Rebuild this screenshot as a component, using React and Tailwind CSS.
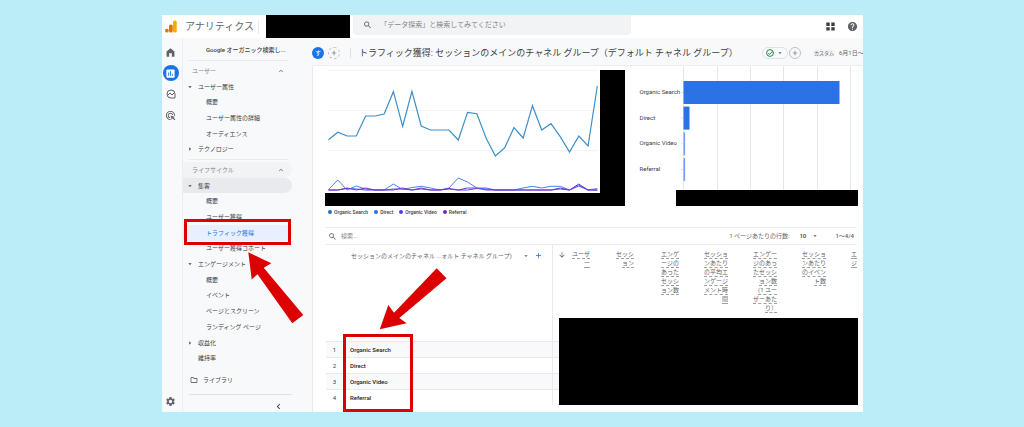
import React from "react";
import {
  MdAdsClick,
  MdArrowDropDown,
  MdArrowRight,
  MdArrowDownward,
  MdAdd,
  MdHelp,
  MdAssessment,
  MdOutlineFolder,
  MdSettings,
  MdSearch,
  MdExpandLess,
  MdChevronLeft,
} from "react-icons/md";

const FIRST_GROUP = [
  { label: "ユーザー属性", kind: "open" },
  { label: "概要", kind: "leaf" },
  { label: "ユーザー属性の詳細", kind: "leaf" },
  { label: "オーディエンス", kind: "leaf" },
  { label: "テクノロジー", kind: "closed" },
];

const SECOND_GROUP = [
  { label: "集客", kind: "open", shaded: true },
  { label: "概要", kind: "leaf" },
  { label: "ユーザー獲得", kind: "leaf" },
  { label: "トラフィック獲得", kind: "leaf", active: true },
  { label: "ユーザー獲得コホート", kind: "leaf" },
  { label: "エンゲージメント", kind: "open" },
  { label: "概要", kind: "leaf" },
  { label: "イベント", kind: "leaf" },
  { label: "ページとスクリーン", kind: "leaf" },
  { label: "ランディング ページ", kind: "leaf" },
  { label: "収益化", kind: "closed" },
  { label: "維持率", kind: "plain" },
];

const METRICS = [
  ["ユーザ", "ー"],
  ["セッシ", "ョン"],
  ["エンゲ", "ージの", "あった", "セッシ", "ョン数"],
  ["セッショ", "ンあたり", "の平均エ", "ンゲージ", "メント時", "間"],
  ["エンゲー", "ジのあっ", "たセッシ", "ョン数", "(1 ユー", "ザーあた", "り）"],
  ["セッショ", "ンあたり", "のイベン", "ト数"],
  ["エ", "ジ"],
];

const CHANNELS = ["Organic Search", "Direct", "Organic Video", "Referral"];

const LEGEND = [
  { label: "Organic Search", dot: "bg-[#1a73b8]" },
  { label: "Direct", dot: "bg-[#1a73e8]" },
  { label: "Organic Video", dot: "bg-[#4545e8]" },
  { label: "Referral", dot: "bg-[#7627bb]" },
];

const ORGANIC = [
  139.7, 132.3, 136, 136, 116, 116, 114, 91.7, 126.5, 91.3, 126, 130, 130, 130, 140, 112.3, 113.7,
  138, 156, 148, 127.7, 138, 105.7, 130, 123.7, 136.7, 152, 136, 146, 86,
];
const DIRECT = [
  189.5, 180, 190, 186, 189, 190, 190, 184, 189.5, 187.5, 186.3, 188, 190, 188, 178, 182, 188, 188,
  190, 190, 190, 188, 186.3, 188, 186.3, 186.3, 190, 185, 190, 188.5,
];
const VIDEO = [
  190, 190, 188.5, 189, 190, 190, 190, 189, 189, 190, 189, 190, 190, 189, 190, 190, 188.5, 189, 190,
  190, 190, 190, 190, 190, 190, 189, 190, 186, 190, 190,
];
const REFERRAL = [
  190, 190, 188, 190, 188, 190, 190, 190, 188, 190, 188, 190, 190, 188.5, 190, 188, 188, 190, 190,
  190, 190, 190, 190, 190, 190, 188, 190, 184, 190, 190,
];

const toPoints = (values) => values.map((y, i) => `${328.5 + i * 9.27},${y}`).join(" ");

function NavRow({ item }) {
  const bg = item.shaded ? "bg-[#e8eaed]" : item.active ? "bg-[#e8f0fe]" : "";
  const pad = item.kind === "leaf" ? "pl-[23px]" : item.kind === "plain" ? "pl-[15px]" : "pl-[3px]";
  const color = item.active ? "text-[#1a73e8]" : "text-[#3c4043]";
  return (
    <li className="flex min-h-0 flex-1">
      <a
        href="#"
        aria-current={item.active ? "page" : undefined}
        className={`mr-5 flex flex-1 items-center rounded-r-full whitespace-nowrap ${bg} ${pad} ${color}`}
      >
        {item.kind === "open" && <MdArrowDropDown className="mr-1 size-2" />}
        {item.kind === "closed" && <MdArrowRight className="mr-1 size-2" />}
        {item.label}
      </a>
    </li>
  );
}

function GroupHeader({ label, shaded }) {
  return (
    <li className="flex min-h-0 flex-1">
      <button
        type="button"
        className={`mr-5 flex flex-1 items-center justify-between rounded-r-full pr-1 pl-[9px] text-[#80868b] ${
          shaded ? "bg-[#f1f3f4]" : ""
        }`}
      >
        {label}
        <MdExpandLess className="mr-[3px] size-2 text-[#5f6368]" />
      </button>
    </li>
  );
}

function Header() {
  return (
    <header className="flex h-[23px] shrink-0 items-center bg-white">
      <svg viewBox="0 0 24 26" className="ml-[3px] h-[13px] w-3 shrink-0" role="img" aria-label="ロゴ">
        <rect x="16" y="1" width="7.5" height="24" rx="3.2" fill="#f9ab00" />
        <rect x="8" y="9" width="7.5" height="16" rx="3.2" fill="#e37400" />
        <circle cx="3.8" cy="21.3" r="3.7" fill="#e37400" />
      </svg>
      <span className="ml-2 text-[10px] leading-3 whitespace-nowrap text-[#5f6368]">アナリティクス</span>
      <div className="ml-1 h-[14px] w-px bg-[#e8eaed]" />
      <div className="ml-[7px] h-full w-[84px] shrink-0 bg-black" />
      <label className="ml-[3px] flex h-5 w-[278px] items-center self-start rounded-b bg-[#f1f3f4] pl-[10px]">
        <MdSearch className="size-[10px] text-[#5f6368]" />
        <input
          type="search"
          aria-label="検索"
          placeholder="「データ探索」と検索してみてください"
          className="ml-2 w-full bg-transparent text-[7px] leading-[10px] outline-none placeholder:text-[#80868b]"
        />
      </label>
      <div className="mr-[5px] ml-auto flex items-center gap-3">
        <button type="button" aria-label="アプリ">
          <svg viewBox="0 0 9 9" className="size-[9px] fill-[#3c4043]">
            <path d="M0.3 0.5h3.4v3.4H0.3zM5.3 0.5h3.4v3.4H5.3zM0.3 5.2h3.4v3.4H0.3zM5.3 5.2h3.4v3.4H5.3z" />
          </svg>
        </button>
        <button type="button" aria-label="ヘルプ">
          <MdHelp className="size-[11px] text-[#5f6368]" />
        </button>
      </div>
    </header>
  );
}

function Rail() {
  return (
    <nav aria-label="メイン" className="flex w-[21px] shrink-0 flex-col items-center border-r border-[#eceef1] pr-[3px] text-[#5f6368]">
      <a href="#" aria-label="ホーム" className="mt-[10px]">
        <svg viewBox="0 0 16 16" className="size-[9px] fill-[#5f6368]">
          <path d="M8 0.5L1 6v9.5h4.6V9.5h4.8v6H15V6z" />
        </svg>
      </a>
      <a href="#" aria-label="レポート" className="mt-2 flex size-4 items-center justify-center rounded-full bg-[#1a73e8] text-white">
        <MdAssessment className="size-[11px]" />
      </a>
      <a href="#" aria-label="探索" className="mt-2">
        <svg viewBox="0 0 20 20" className="size-[10px] fill-none stroke-[#5f6368] stroke-2">
          <path d="M18 10a8 8 0 1 0-8 8h8z" />
          <path d="M4 12l4-4 4 4 6-6" />
        </svg>
      </a>
      <a href="#" aria-label="広告" className="mt-[11px]">
        <MdAdsClick className="size-[11px]" />
      </a>
      <a href="#" aria-label="管理" className="mt-auto mb-[5px]">
        <MdSettings className="size-[11px]" />
      </a>
    </nav>
  );
}

function Sidebar() {
  return (
    <nav aria-label="レポート" className="flex w-[129px] shrink-0 flex-col text-[6px] leading-2">
      <a href="#" className="mr-6 ml-[6px] flex h-[23px] shrink-0 items-center border-b border-[#e8eaed] pt-px pl-[17px] font-medium whitespace-nowrap text-[#3c4043]">
        Google オーガニック検索し...
      </a>
      <ul className="mt-[2px] flex min-h-0 flex-[6] flex-col">
        <GroupHeader label="ユーザー" />
        {FIRST_GROUP.map((item) => (
          <NavRow key={item.label} item={item} />
        ))}
      </ul>
      <div className="mt-[2px] mr-6 mb-[2px] ml-[6px] h-px shrink-0 bg-[#e8eaed]" />
      <ul className="flex min-h-0 flex-[13] flex-col">
        <GroupHeader label="ライフサイクル" shaded />
        {SECOND_GROUP.map((item, i) => (
          <NavRow key={i} item={item} />
        ))}
      </ul>
      <a href="#" className="mt-1 ml-[7px] flex h-5 shrink-0 items-center text-[#3c4043]">
        <MdOutlineFolder className="mr-[5px] size-2" />
        ライブラリ
      </a>
      <div className="mt-1 mr-5 ml-[6px] h-px shrink-0 bg-[#dfe1e5]" />
      <button type="button" aria-label="メニューを閉じる" className="mr-7 flex h-[17px] shrink-0 items-center self-end pt-[6px]">
        <MdChevronLeft className="size-[11px] text-[#3c4043]" />
      </button>
    </nav>
  );
}

function TitleBar() {
  return (
    <div className="flex h-7 shrink-0 items-center overflow-hidden border-b border-[#eceef1] pt-[2px] whitespace-nowrap">
      <span className="flex size-3 shrink-0 items-center justify-center rounded-full bg-[#1a73e8] text-[6px] leading-none text-white">す</span>
      <button type="button" aria-label="比較を追加" className="ml-1 flex size-3 shrink-0 items-center justify-center rounded-full border border-dashed border-[#bdc1c6]">
        <MdAdd className="size-2 text-[#5f6368]" />
      </button>
      <div className="ml-[10px] h-[10px] w-px shrink-0 bg-[#dfe1e5]" />
      <h1 className="ml-2 text-[9px] leading-3 text-[#3c4043]">
        トラフィック獲得: セッションのメインのチャネル グループ（デフォルト チャネル グループ）
      </h1>
      <div className="ml-auto flex shrink-0 items-center">
        <button type="button" aria-label="ステータス" className="flex h-3 w-[26px] items-center justify-between rounded-full border border-[#dfe1e5] px-[3px]">
          <svg viewBox="0 0 16 16" className="size-2 fill-none stroke-[#1e8e3e] stroke-2">
            <circle cx="8" cy="8" r="6.8" />
            <path d="M4.5 8.2l2.6 2.6 6-6.3" />
          </svg>
          <MdArrowDropDown className="size-2 text-[#5f6368]" />
        </button>
        <button type="button" aria-label="追加" className="ml-px flex size-3 items-center justify-center rounded-full border border-[#bdc1c6]">
          <MdAdd className="size-2 text-[#5f6368]" />
        </button>
        <span className="ml-3 rounded-sm bg-[#f1f3f4] px-px text-[5px] leading-2 text-[#5f6368]">カスタム</span>
        <span className="ml-1 w-6 overflow-hidden text-[6px] leading-2 text-[#5f6368]">6月1日〜</span>
      </div>
    </div>
  );
}

function LineChart() {
  return (
    <svg viewBox="325 66 275 127" className="min-w-0 flex-1 bg-white" fill="none" role="img" aria-label="チャネル別の推移">
      <path d="M328 70.5H598M328 110.5H598M328 150.5H598" stroke="#f1f3f4" />
      <polyline points={toPoints(ORGANIC)} stroke="#3d8fc9" strokeWidth="1.2" />
      <polyline points={toPoints(DIRECT)} stroke="#4285f4" />
      <polyline points={toPoints(VIDEO)} stroke="#4f4fe8" />
      <polyline points={toPoints(REFERRAL)} stroke="#7b35c9" />
    </svg>
  );
}

function BarChart() {
  const rows = [
    { label: "Organic Search", y: 81, w: 156, fill: "#2b72e6" },
    { label: "Direct", y: 106.6, w: 6, fill: "#2b72e6" },
    { label: "Organic Video", y: 132.3, w: 1.6, fill: "#6c9ff5" },
    { label: "Referral", y: 158, w: 1.6, fill: "#6c9ff5" },
  ];
  return (
    <svg viewBox="639 66 224 124" className="w-full" role="img" aria-label="チャネル別のユーザー数">
      <path d="M683.5 66V190M717.5 66V190M750.5 66V190M783.5 66V190M817.5 66V190M850.5 66V190" stroke="#e4e6e9" />
      {rows.map((row) => (
        <g key={row.label}>
          <text x="639.5" y={row.y + 13} fontSize="6" fill="#3c4043" className="font-['Roboto',sans-serif]">
            {row.label}
          </text>
          <path d={`M681 ${row.y + 11.5}h2.5`} stroke="#dfe1e5" />
          <rect x="683.5" y={row.y} width={row.w} height="23" fill={row.fill} />
        </g>
      ))}
    </svg>
  );
}

function Charts() {
  return (
    <section className="flex shrink-0">
      <div className="ml-3 min-w-0 flex-[300]">
        <div className="flex">
          <LineChart />
          <div className="mt-1 w-[25px] bg-black" />
        </div>
        <div className="h-[13px] bg-black" />
        <ul className="mt-[2px] ml-[3px] flex gap-[6px] text-[5px] leading-2 font-medium text-[#3c4043]">
          {LEGEND.map((entry) => (
            <li key={entry.label} className="flex items-center gap-[2px]">
              <span className={`size-1 rounded-full ${entry.dot}`} />
              {entry.label}
            </li>
          ))}
        </ul>
      </div>
      <div className="ml-[14px] min-w-0 flex-[224]">
        <BarChart />
        <div className="mr-[5px] ml-[37px] h-4 bg-black" />
      </div>
    </section>
  );
}

function TableToolbar() {
  return (
    <div className="mt-[11px] mr-[6px] ml-[13px] flex h-[18px] shrink-0 items-center border-y border-[#e8eaed] text-[6px] leading-2 text-[#5f6368]">
      <label className="flex items-center">
        <MdSearch className="ml-[2px] size-[9px]" />
        <input type="search" aria-label="表を検索" placeholder="検索..." className="ml-1 w-40 bg-transparent outline-none placeholder:text-[#80868b]" />
      </label>
      <label htmlFor="rows-per-page" className="ml-auto">
        1 ページあたりの行数:
      </label>
      <span className="relative ml-[10px] flex items-center">
        <select id="rows-per-page" defaultValue="10" className="w-5 appearance-none bg-transparent font-medium text-[#3c4043]">
          <option>10</option>
          <option>25</option>
        </select>
        <MdArrowDropDown className="pointer-events-none absolute right-0 size-2" />
      </span>
      <span className="mr-[3px] ml-4 font-medium">1〜4/4</span>
    </div>
  );
}

function ChannelTable() {
  return (
    <div className="relative mr-[6px] ml-[13px]">
      <table className="w-full table-fixed border-collapse text-[6px] leading-[9px]">
        <colgroup>
          <col className="w-[17px]" />
          <col />
          <col className="w-[38px]" />
          <col className="w-[44px]" />
          <col className="w-[45px]" />
          <col className="w-[49px]" />
          <col className="w-[49px]" />
          <col className="w-[49px]" />
          <col className="w-[31px]" />
        </colgroup>
        <thead>
          <tr className="h-24 text-[#5f6368]">
            <th aria-label="番号" />
            <th className="border-r border-[#e8eaed] pt-[6px] align-top font-normal">
              <div className="flex items-center pl-2 whitespace-nowrap">
                セッションのメインのチャネル ...ォルト チャネル グループ)
                <button type="button" aria-label="ディメンションを選択" className="ml-auto">
                  <MdArrowDropDown className="size-2" />
                </button>
                <button type="button" aria-label="ディメンションを追加" className="mr-[9px] ml-1">
                  <MdAdd className="size-[9px] text-[#1a73e8]" />
                </button>
              </div>
            </th>
            {METRICS.map((lines, i) => (
              <th key={i} className="pt-[5px] align-top font-normal">
                <div className="flex justify-between">
                  {i === 0 ? <MdArrowDownward className="mt-px ml-[5px] size-2" /> : <span />}
                  <div className="flex flex-col items-end">
                    {lines.map((line) => (
                      <span key={line} className="h-[9px] border-b border-dashed border-[#9aa0a6] leading-2 whitespace-nowrap">
                        {line}
                      </span>
                    ))}
                  </div>
                </div>
              </th>
            ))}
          </tr>
        </thead>
        <tbody>
          {CHANNELS.map((name, i) => (
            <tr key={name} className="h-4 border-t border-[#e8eaed] odd:bg-[#f8f9fb]">
              <td className="text-center text-[#3c4043]">{i + 1}</td>
              <td className="border-r border-[#e8eaed] pl-[7px] font-medium text-[#202124]">{name}</td>
              <td colSpan={7} />
            </tr>
          ))}
        </tbody>
      </table>
      <div className="absolute top-[73px] -right-px h-[87px] w-[299px] bg-black" />
    </div>
  );
}

function Annotations() {
  return (
    <svg viewBox="162 15 701 397" className="pointer-events-none absolute inset-0 size-full" fill="none" aria-hidden="true">
      <g stroke="#dc0000" strokeWidth="3">
        <rect x="185.5" y="220.5" width="104" height="23" />
        <rect x="344.5" y="335.5" width="67" height="75" />
      </g>
      <g fill="#dc0000">
        <path d="M248.3 252.3L271.3 263.3L263.7 267.8L303.3 315L292.3 323.3L257.5 274.2L251.7 279.5Z" />
        <path d="M379.8 329.3L388.3 305L394 312.7L436.7 268.3L446.5 278.3L399.3 318L406.7 323.3Z" />
      </g>
    </svg>
  );
}

export default function App() {
  return (
    <div className="flex h-screen bg-[#bbedf9] py-[15px] pr-[161px] pl-[162px] font-['Roboto','Noto_Sans_CJK_JP',sans-serif]">
      <div lang="ja" className="relative flex min-w-0 flex-1 flex-col overflow-hidden bg-[#f8f9fb]">
        <Header />
        <div className="flex min-h-0 flex-1">
          <Rail />
          <Sidebar />
          <main className="flex min-w-0 flex-1 flex-col">
            <TitleBar />
            <div className="flex min-h-0 flex-1 flex-col border-l border-[#e8eaed] bg-white">
              <Charts />
              <TableToolbar />
              <ChannelTable />
            </div>
          </main>
        </div>
        <Annotations />
      </div>
    </div>
  );
}
